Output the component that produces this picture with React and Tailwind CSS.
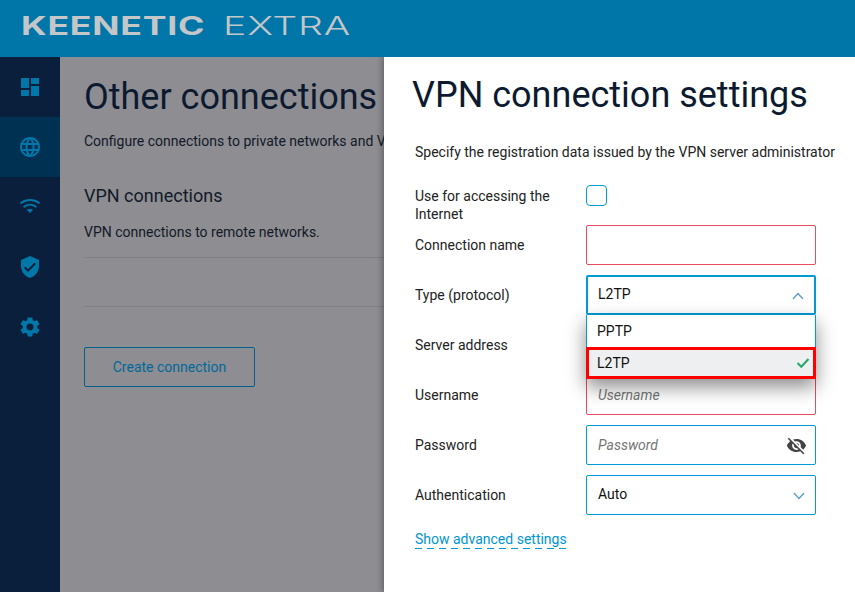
const P = {
  dash: "M3 13h8V3H3v10zm0 8h8v-6H3v6zm10 0h8V11h-8v10zm0-18v6h8V3h-8z",
  globe: "M11.99 2C6.47 2 2 6.48 2 12s4.47 10 9.99 10C17.52 22 22 17.52 22 12S17.52 2 11.99 2zm6.93 6h-2.95c-.32-1.25-.78-2.45-1.38-3.56 1.84.63 3.37 1.91 4.33 3.56zM12 4.04c.83 1.2 1.48 2.53 1.91 3.96h-3.82c.43-1.43 1.08-2.76 1.91-3.96zM4.26 14C4.1 13.36 4 12.69 4 12s.1-1.36.26-2h3.38c-.08.66-.14 1.32-.14 2 0 .68.06 1.34.14 2H4.26zm.82 2h2.95c.32 1.25.78 2.45 1.38 3.56-1.84-.63-3.37-1.9-4.33-3.56zm2.95-8H5.08c.96-1.66 2.49-2.93 4.33-3.56C8.81 5.55 8.35 6.75 8.03 8zM12 19.96c-.83-1.2-1.48-2.53-1.91-3.96h3.82c-.43 1.43-1.08 2.76-1.91 3.96zM14.34 14H9.66c-.09-.66-.16-1.32-.16-2 0-.68.07-1.35.16-2h4.68c.09.65.16 1.32.16 2 0 .68-.07 1.34-.16 2zm.25 5.56c.6-1.11 1.06-2.31 1.38-3.56h2.95c-.96 1.65-2.49 2.93-4.33 3.56zM16.36 14c.08-.66.14-1.32.14-2 0-.68-.06-1.34-.14-2h3.38c.16.64.26 1.31.26 2s-.1 1.36-.26 2h-3.38z",
  shield: "M12 1L3 5v6c0 5.55 3.84 10.74 9 12 5.16-1.26 9-6.45 9-12V5l-9-4zm-2 16l-4-4 1.41-1.41L10 14.17l6.59-6.59L18 9l-8 8z",
  gear: "M19.14 12.94c.04-.3.06-.61.06-.94 0-.32-.02-.64-.07-.94l2.03-1.58c.18-.14.23-.41.12-.61l-1.92-3.32c-.12-.22-.37-.29-.59-.22l-2.39.96c-.5-.38-1.03-.7-1.62-.94l-.36-2.54c-.04-.24-.24-.41-.48-.41h-3.84c-.24 0-.43.17-.47.41l-.36 2.54c-.59.24-1.13.57-1.62.94l-2.39-.96c-.22-.08-.47 0-.59.22L2.74 8.87c-.12.21-.08.47.12.61l2.03 1.58c-.05.3-.09.63-.09.94s.02.64.07.94l-2.03 1.58c-.18.14-.23.41-.12.61l1.92 3.32c.12.22.37.29.59.22l2.39-.96c.5.38 1.03.7 1.62.94l.36 2.54c.05.24.24.41.48.41h3.84c.24 0 .44-.17.47-.41l.36-2.54c.59-.24 1.13-.56 1.62-.94l2.39.96c.22.08.47 0 .59-.22l1.92-3.32c.12-.22.07-.47-.12-.61l-2.01-1.58zM12 15.6c-1.98 0-3.6-1.62-3.6-3.6s1.62-3.6 3.6-3.6 3.6 1.62 3.6 3.6-1.62 3.6-3.6 3.6z",
  eyeOff: "M12 7c2.76 0 5 2.24 5 5 0 .65-.13 1.26-.36 1.83l2.92 2.92c1.51-1.26 2.7-2.89 3.43-4.75-1.73-4.39-6-7.5-11-7.5-1.4 0-2.74.25-3.98.7l2.16 2.16C10.74 7.13 11.35 7 12 7zM2 4.27l2.28 2.28.46.46C3.08 8.3 1.78 10.02 1 12c1.73 4.39 6 7.5 11 7.5 1.55 0 3.03-.3 4.38-.84l.42.42L19.73 22 21 20.73 3.27 3 2 4.27zM7.53 9.8l1.55 1.55c-.05.21-.08.43-.08.65 0 1.66 1.34 3 3 3 .22 0 .44-.03.65-.08l1.55 1.55c-.67.33-1.41.53-2.2.53-2.76 0-5-2.24-5-5 0-.79.2-1.53.53-2.2zm4.31-.78l3.15 3.15.02-.16c0-1.66-1.34-3-3-3l-.17.01z",
};

function Fill({ d, size = 24 }) {
  return (
    <svg width={size} height={size} viewBox="0 0 24 24" fill="currentColor"><path d={d} /></svg>
  );
}

function Wifi() {
  return (
    <svg width="22" height="22" viewBox="0 0 22 22" fill="none" stroke="currentColor" strokeWidth="2" strokeLinecap="round">
      <path d="M2 7c5.2-4 12.8-4 18 0" />
      <path d="M5.3 10.6c3.4-2.6 8-2.6 11.4 0" />
      <path d="M8.6 14l2.4 2.6 2.4-2.6c-1.4-1-3.4-1-4.8 0z" fill="currentColor" strokeWidth="1" />
    </svg>
  );
}

function Chevron({ up }) {
  return (
    <svg className="mt-px" width="12" height="8" viewBox="0 0 12 8" fill="none" stroke="#5b9bc9" strokeWidth="1.3">
      <path d={up ? "M1 7l5-5.5L11 7" : "M1 1l5 5.5L11 1"} />
    </svg>
  );
}

function Row({ label, children }) {
  return (
    <div className="flex h-[50px] text-[14px] leading-[18px] text-[#222]">
      <div className="w-[171px] shrink-0 pt-[11px]">{label}</div>
      <div className="w-[230px] shrink-0">{children}</div>
    </div>
  );
}

function Box({ tone = "blue", thick, tight, children }) {
  const border = tone === "red" ? "border-[#ec4a5e]" : "border-[#009bd6]";
  return (
    <div className={"flex h-10 w-[230px] items-center justify-between rounded-[2px] bg-white " + border + " " + (thick ? "border-2 pl-[10px] " : "border pl-[11px] ") + (tight ? "pr-[8px]" : "pr-[10px]")}>
      {children}
    </div>
  );
}

function Item({ d, active, node }) {
  return (
    <div className={"flex h-[60px] items-center justify-center text-[#0077a9] " + (active ? "bg-[#003152]" : "")}>
      {node || <Fill d={d} size={24} />}
    </div>
  );
}

export default function App() {
  return (
    <div className="relative h-[592px] w-[855px] overflow-hidden bg-[#8e8d92] font-['Roboto',sans-serif]">
      <header className="relative z-20 flex h-[57px] items-start gap-[19px] overflow-hidden bg-[#0075a8] pt-[14px] pl-[21px]">
        <span className="w-[183px] origin-left scale-x-[1.43] font-['Inter',sans-serif] text-[25px] font-bold leading-none tracking-[0.5px] whitespace-nowrap text-[#c4c6c8]">KEENETIC</span>
        <span className="w-[126px] origin-left scale-x-[1.57] font-['Inter',sans-serif] text-[25px] font-light leading-none tracking-[0.5px] whitespace-nowrap text-[#c4c6c8]">EXTRA</span>
      </header>
      <div className="flex h-[535px]">
        <nav className="w-[60px] shrink-0 bg-[#0a1f3b]">
          <Item d={P.dash} />
          <Item d={P.globe} active />
          <Item node={<Wifi />} />
          <Item d={P.shield} />
          <Item d={P.gear} />
        </nav>
        <main className="min-w-0 flex-1 overflow-hidden pl-6 text-[#121a28]">
          <h1 className="mt-[18px] text-[36px] leading-[44px] font-normal whitespace-nowrap text-[#0c1a30]">Other connections</h1>
          <p className="mt-[12px] text-[14px] leading-[20px] whitespace-nowrap">Configure connections to private networks and VPN</p>
          <h2 className="mt-[33px] text-[18px] leading-[24px] font-normal">VPN connections</h2>
          <p className="mt-[14px] text-[14px] leading-[20px]">VPN connections to remote networks.</p>
          <div className="mt-[15px] h-[50px] border-y border-[#807f84]"></div>
          <button className="mt-[40px] h-10 w-[171px] rounded-[2px] border border-[#00628c] text-[14px] text-[#00699a]">Create connection</button>
        </main>
      </div>

      <aside className="absolute top-[57px] right-0 bottom-0 w-[471px] bg-white pl-[29px] shadow-[-2px_0_6px_rgba(0,0,0,0.3)]">
        <h1 className="-ml-px mt-[16px] text-[36px] leading-[44px] font-normal whitespace-nowrap text-[#0c1a30]">VPN connection settings</h1>
        <div className="pl-[2px]">
          <p className="mt-[25px] text-[14px] leading-[20px] whitespace-nowrap text-[#222]">Specify the registration data issued by the VPN server administrator</p>
          <div className="mt-[23px]">
            <div className="flex h-10 text-[14px] leading-[18px] text-[#222]">
              <div className="w-[171px] shrink-0 pt-[2px]">Use for accessing the Internet</div>
              <div className="h-[21px] w-[21px] rounded-[4px] border border-[#009bd6]"></div>
            </div>
            <Row label="Connection name"><Box tone="red" /></Row>
            <Row label="Type (protocol)">
              <div className="relative z-10">
                <Box thick>
                  <span className="pb-[2px] text-[#111]">L2TP</span>
                  <Chevron up />
                </Box>
                <div className="absolute top-10 left-0 w-[230px] border-x border-[#009bd6] bg-white shadow-[0_8px_18px_rgba(0,0,0,0.45)]">
                  <div className="flex h-8 items-center pl-[10px] text-[#111]">PPTP</div>
                  <div className="-mx-px flex h-8 items-center justify-between border-[3px] border-[#ff0000] bg-[#eeeff0] pr-[3px] pl-[8px] text-[#111]">
                    L2TP
                    <svg width="14" height="12" viewBox="0 0 14 12" fill="none" stroke="#25a86b" strokeWidth="2">
                      <path d="M1.5 6l3.8 3.8L12.5 2" />
                    </svg>
                  </div>
                </div>
              </div>
            </Row>
            <Row label="Server address"><Box /></Row>
            <Row label="Username">
              <Box tone="red"><span className="italic text-[#757575]">Username</span></Box>
            </Row>
            <Row label="Password">
              <Box tight>
                <span className="italic text-[#757575]">Password</span>
                <span className="text-[#444]"><Fill d={P.eyeOff} size={21} /></span>
              </Box>
            </Row>
            <Row label="Authentication">
              <Box><span className="pb-[2px] text-[#111]">Auto</span><Chevron /></Box>
            </Row>
          </div>
          <a className="mt-[6px] inline-block text-[14px] leading-[17px] text-[#0095d3]">
            Show advanced settings
            <div className="h-px bg-[repeating-linear-gradient(90deg,#0095d3_0_7px,transparent_7px_12px)]"></div>
          </a>
        </div>
      </aside>
    </div>
  );
}
